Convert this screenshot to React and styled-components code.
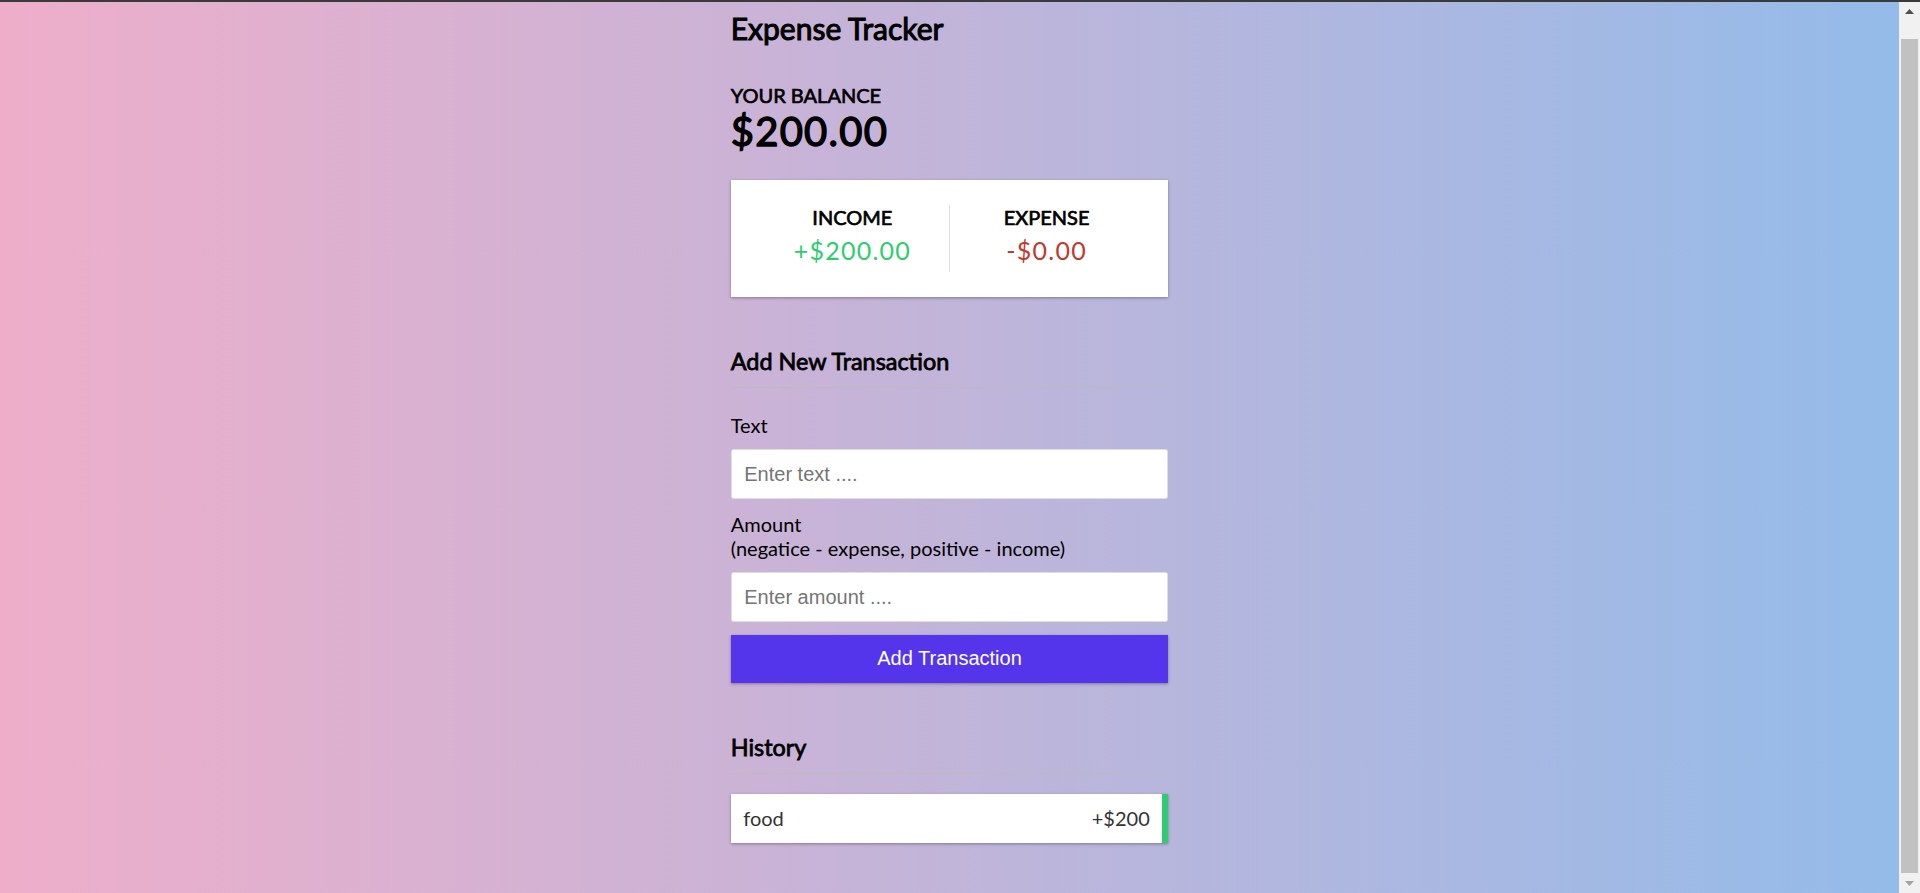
import React, { useState } from "react";
import styled, { createGlobalStyle, css } from "styled-components";

const GlobalStyle = createGlobalStyle`
  * {
    box-sizing: border-box;
  }

  html {
    background: #f1f1f1;
  }

  body {
    margin: 0;
    font-family: Lato, "Open Sans", sans-serif;
    color: #000;
  }
`;

// headings in the shot are regular Lato with a faux-bold outline
const fauxBold = css`
  font-weight: 400;
  -webkit-text-stroke: 0.034em currentColor;
`;

const Shell = styled.div`
  display: flex;
  min-height: 100vh;
  border-top: 2px solid #3a3a3a;
`;

const Main = styled.main`
  flex: 1;
  background: linear-gradient(90deg, #eeaeca 0%, #94bbe9 100%);
`;

const ScrollRail = styled.div`
  position: sticky;
  top: 0;
  align-self: flex-start;
  width: 21px;
  height: calc(100vh - 2px);
  display: flex;
  flex-direction: column;
  background: #f1f1f1;
`;

const ScrollButton = styled.div`
  height: ${(p) => p.$h}px;
  display: flex;
  align-items: center;
  justify-content: center;
`;

const ScrollTrack = styled.div`
  flex: 1;
  display: flex;
  flex-direction: column;
  padding: 18px 2px 0;
`;

const ScrollThumb = styled.div`
  flex: 1;
  background: #c1c1c1;
`;

const Container = styled.div`
  width: 437.5px;
  margin: 0 auto;
  padding: 8px 0 17px;
`;

const Title = styled.h2`
  font-size: 30px;
  line-height: 36px;
  ${fauxBold};
  margin: 0;
`;

const SmallHeading = styled.h4`
  font-size: 20px;
  line-height: 24px;
  ${fauxBold};
  text-transform: uppercase;
  margin: ${(p) => (p.$top ? "37px 0 0" : "0")};
`;

const Balance = styled.h1`
  font-size: 40px;
  line-height: 48px;
  ${fauxBold};
  letter-spacing: 1.25px;
  margin: 0;
`;

const IncExpCard = styled.div`
  display: flex;
  justify-content: space-between;
  background: #fff;
  padding: 25px;
  margin: 25px 0;
  box-shadow: 0 1.25px 3.75px rgba(0, 0, 0, 0.12), 0 1.25px 2.5px rgba(0, 0, 0, 0.24);
`;

const IncExpCol = styled.div`
  flex: 1;
  text-align: center;
  border-right: ${(p) => (p.$divider ? "1.25px solid #dedede" : "none")};
`;

const Money = styled.p`
  font-size: 25px;
  line-height: 30px;
  letter-spacing: 1.25px;
  margin: 6.25px 0;
  color: ${(p) => (p.$plus ? "#2ecc71" : "#c0392b")};
`;

const SectionHeading = styled.h3`
  font-size: 23.4px;
  line-height: 28px;
  ${fauxBold};
  border-bottom: 1px solid #bbb;
  padding-bottom: 12px;
  margin: 50px 0 12.5px;
`;

const Form = styled.form`
  display: flex;
  flex-direction: column;
`;

const Field = styled.div`
  display: flex;
  flex-direction: column;
`;

const Label = styled.label`
  display: block;
  font-size: 20px;
  line-height: 24px;
  margin: 12.5px 0;
`;

const Input = styled.input`
  display: block;
  width: 100%;
  border: 1.25px solid #dedede;
  border-radius: 2.5px;
  font-family: "Liberation Sans", Arial, sans-serif;
  font-size: 20px;
  padding: 12.5px;
  background: #fff;
  color: #000;
  outline: none;

  &::placeholder {
    color: #757575;
  }
`;

const Button = styled.button`
  display: block;
  width: 100%;
  cursor: pointer;
  background-color: #5535eb;
  color: #fff;
  border: 0;
  font-family: "Liberation Sans", Arial, sans-serif;
  font-size: 20px;
  line-height: 23px;
  padding: 12.5px;
  margin-top: 12.5px;
  box-shadow: 0 1.25px 3.75px rgba(0, 0, 0, 0.12), 0 1.25px 2.5px rgba(0, 0, 0, 0.24);
`;

const List = styled.ul`
  list-style: none;
  padding: 0;
  margin: 20px 0 50px;
  display: flex;
  flex-direction: column;
  gap: 12.5px;
`;

const Item = styled.li`
  display: flex;
  justify-content: space-between;
  background: #fff;
  color: #333;
  font-size: 20px;
  line-height: 24px;
  padding: 12.5px;
  border-right: 6px solid ${(p) => (p.$plus ? "#2ecc71" : "#c0392b")};
  box-shadow: 0 1.25px 3.75px rgba(0, 0, 0, 0.12), 0 1.25px 2.5px rgba(0, 0, 0, 0.24);
`;

const Arrow = ({ up, color }) => (
  <svg width="9" height="5" viewBox="0 0 9 5">
    <path d={up ? "M4.5 0 L9 5 L0 5 Z" : "M0 0 L9 0 L4.5 5 Z"} fill={color} />
  </svg>
);

const App = () => {
  const [transactions] = useState([{ id: 1, text: "food", amount: 200 }]);
  const [text, setText] = useState("");
  const [amount, setAmount] = useState("");

  const amounts = transactions.map((t) => t.amount);
  const total = amounts.reduce((a, b) => a + b, 0).toFixed(2);
  const income = amounts.filter((a) => a > 0).reduce((a, b) => a + b, 0).toFixed(2);
  const expense = Math.abs(amounts.filter((a) => a < 0).reduce((a, b) => a + b, 0)).toFixed(2);

  return (
    <>
      <GlobalStyle />
      <Shell>
        <Main>
          <Container>
            <Title>Expense Tracker</Title>

            <SmallHeading $top>Your Balance</SmallHeading>
            <Balance>${total}</Balance>

            <IncExpCard>
              <IncExpCol $divider>
                <SmallHeading>Income</SmallHeading>
                <Money $plus>+${income}</Money>
              </IncExpCol>
              <IncExpCol>
                <SmallHeading>Expense</SmallHeading>
                <Money>-${expense}</Money>
              </IncExpCol>
            </IncExpCard>

            <SectionHeading>Add New Transaction</SectionHeading>
            <Form onSubmit={(e) => e.preventDefault()}>
              <Field>
                <Label htmlFor="text">Text</Label>
                <Input
                  type="text"
                  id="text"
                  value={text}
                  onChange={(e) => setText(e.target.value)}
                  placeholder="Enter text ...."
                />
              </Field>
              <Field>
                <Label htmlFor="amount">
                  Amount <br />
                  (negatice - expense, positive - income)
                </Label>
                <Input
                  type="number"
                  id="amount"
                  value={amount}
                  onChange={(e) => setAmount(e.target.value)}
                  placeholder="Enter amount ...."
                />
              </Field>
              <Button type="submit">Add Transaction</Button>
            </Form>

            <SectionHeading>History</SectionHeading>
            <List>
              {transactions.map((t) => (
                <Item key={t.id} $plus={t.amount > 0}>
                  {t.text}
                  <span>
                    {t.amount < 0 ? "-" : "+"}${Math.abs(t.amount)}
                  </span>
                </Item>
              ))}
            </List>
          </Container>
        </Main>
        <ScrollRail>
          <ScrollButton $h={19}>
            <Arrow up color="#505050" />
          </ScrollButton>
          <ScrollTrack>
            <ScrollThumb />
          </ScrollTrack>
          <ScrollButton $h={20}>
            <Arrow color="#a3a3a3" />
          </ScrollButton>
        </ScrollRail>
      </Shell>
    </>
  );
};

export default App;
